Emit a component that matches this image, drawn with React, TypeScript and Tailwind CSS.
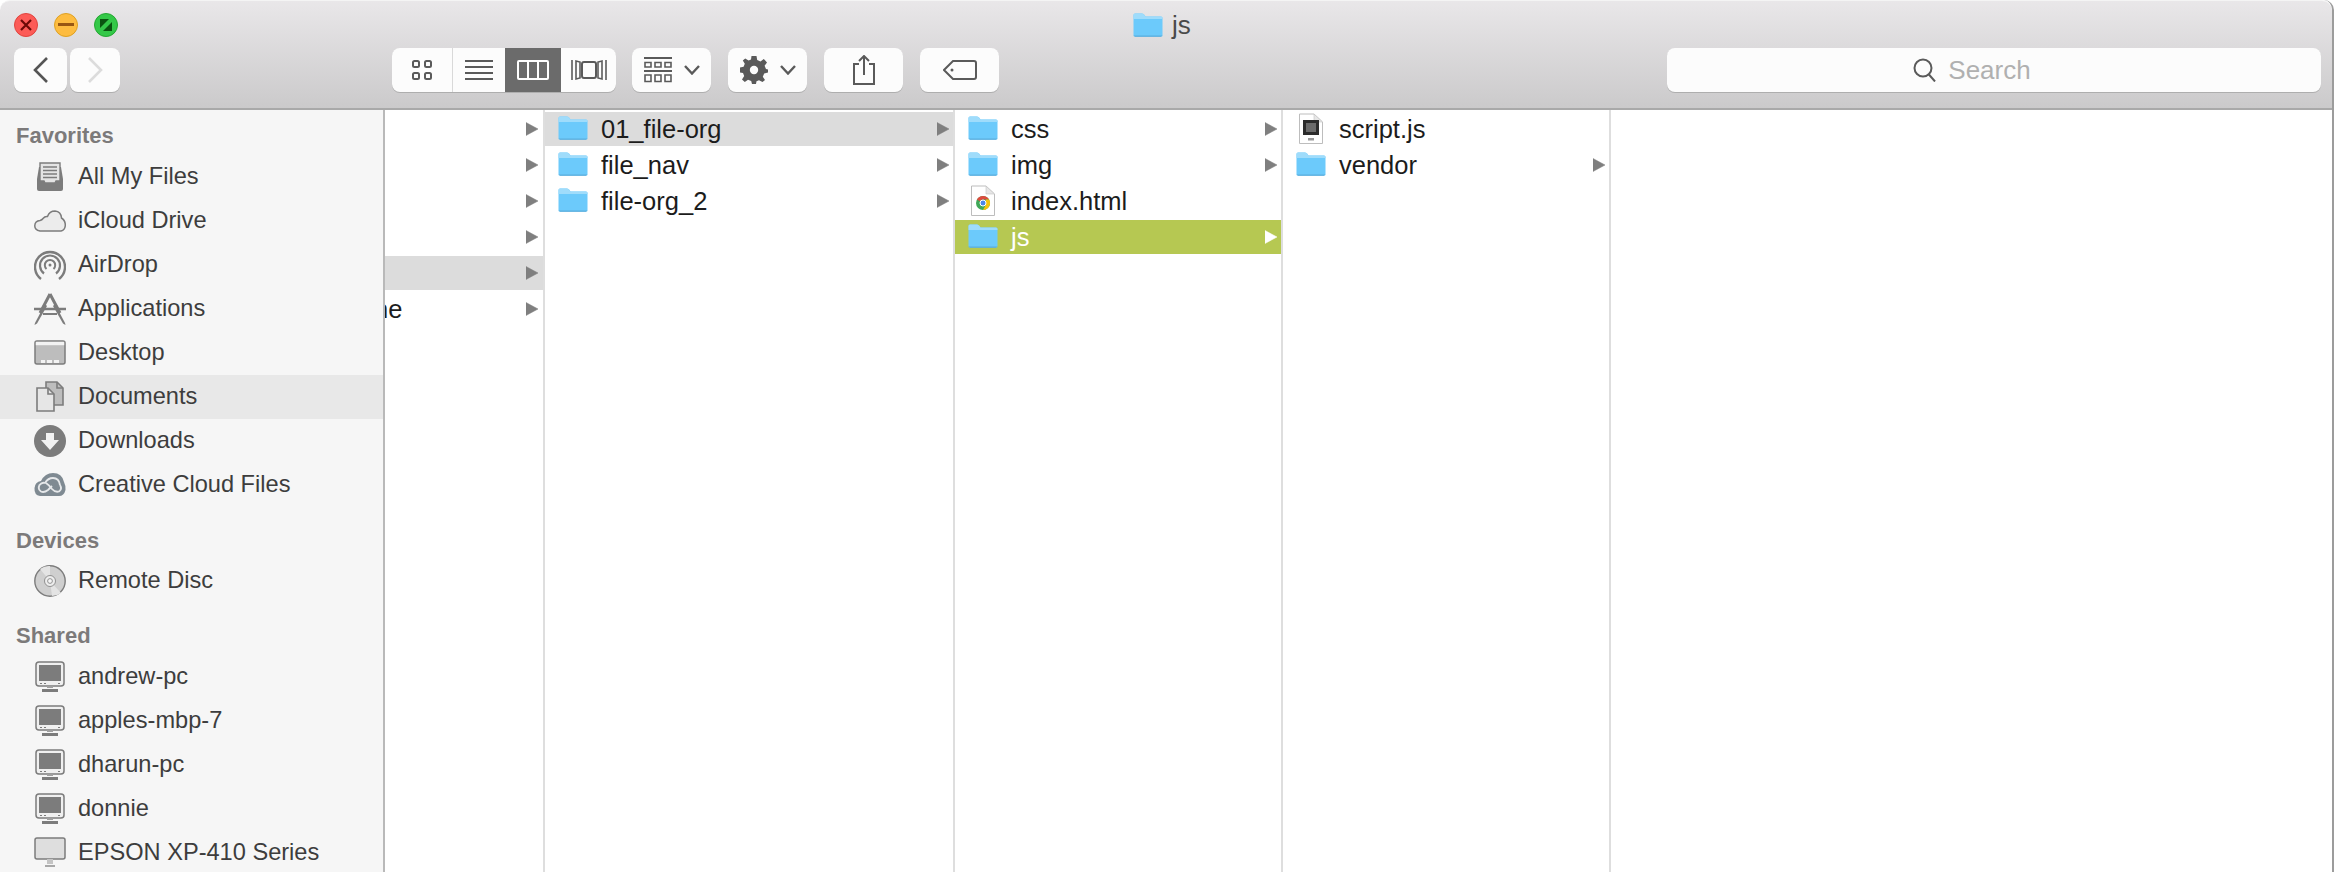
import type { ReactNode } from "react";

// Finder window, column view

function Folder({ className = "" }: { className?: string }) {
  return (
    <svg width="30" height="24" viewBox="0 0 30 24" className={`shrink-0 ${className}`}>
      <path d="M0.5 2 Q0.5 0.5 2 0.5 H9 Q10.5 0.5 11.5 2 L12.5 3.5 H28 Q29.5 3.5 29.5 5 V22 Q29.5 23.5 28 23.5 H2 Q0.5 23.5 0.5 22 Z" fill="#6ccafb" />
      <path d="M0.5 2 Q0.5 0.5 2 0.5 H9 Q10.5 0.5 11.5 2 L12.5 3.5 H28 Q29.5 3.5 29.5 5 V6 H0.5 Z" fill="#9fdcfb" />
      <path d="M0.5 22 Q0.5 23.5 2 23.5 H28 Q29.5 23.5 29.5 22 V22.4 H0.5 Z" fill="#5aaedd" />
      <path d="M2 23 H28 V23.6 H2 Z" fill="#5aaedd" />
    </svg>
  );
}

function ChromeFile() {
  return (
    <svg width="30" height="32" viewBox="0 0 30 32" className="shrink-0">
      <path d="M3.5 1 H18 L26.5 9 V30.5 H3.5 Z" fill="#fff" stroke="#bdbdbd" />
      <path d="M18 1 L26.5 9 H18 Z" fill="#e6e6e6" stroke="#c4c4c4" strokeWidth="0.6" />
      <circle cx="15" cy="18" r="7" fill="#3fa757" />
      <path d="M15 11 A7 7 0 0 1 21.1 14.5 L15 14.5 A3.5 3.5 0 0 0 11.9 16.3 L8.9 14.5 A7 7 0 0 1 15 11 Z" fill="#dd4b3e" />
      <path d="M21.1 14.5 A7 7 0 0 1 15 25 L18 19.5 L18 14.5 Z" fill="#f4c20d" />
      <circle cx="15" cy="18" r="3" fill="#4a86e8" stroke="#fff" />
    </svg>
  );
}

function ScriptFile() {
  return (
    <svg width="30" height="32" viewBox="0 0 30 32" className="shrink-0">
      <path d="M3.5 1 H18 L26.5 9 V30.5 H3.5 Z" fill="#fff" stroke="#bdbdbd" />
      <path d="M18 1 L26.5 9 H18 Z" fill="#e6e6e6" stroke="#c4c4c4" strokeWidth="0.6" />
      <rect x="7" y="7" width="16" height="15" fill="#2c2c2c" />
      <rect x="10" y="10" width="10" height="9" fill="#6b6b6b" />
      <rect x="12" y="25" width="6" height="2.5" fill="#9a9a9a" />
    </svg>
  );
}

function Arrow({ color = "#7f7f7f" }: { color?: string }) {
  return (
    <svg width="12" height="14" viewBox="0 0 12 14" className="shrink-0">
      <path d="M0 0.5 L12 7 L0 13.5 Z" fill={color} stroke={color} strokeWidth="0.5" strokeLinejoin="round" />
    </svg>
  );
}

type Entry = { name: string; icon?: "folder" | "chrome" | "script"; arrow?: boolean; state?: "gray" | "green" };

function Row({ entry }: { entry: Entry }) {
  const bg = entry.state === "green" ? "bg-[#b6c852]" : entry.state === "gray" ? "bg-[#dcdcdc]" : "";
  const text = entry.state === "green" ? "text-white" : "text-[#1c1c1c]";
  return (
    <div className={`flex items-center h-[34px] pl-[13px] pr-[4px] ${bg}`}>
      {entry.icon === "folder" && <Folder className="mb-[2px]" />}
      {entry.icon === "chrome" && <ChromeFile />}
      {entry.icon === "script" && <ScriptFile />}
      <span className={`ml-[13px] pt-[2px] text-[25.5px] leading-none ${text}`}>{entry.name}</span>
      {entry.arrow && (
        <span className="ml-auto">
          <Arrow color={entry.state === "green" ? "#ffffff" : "#7f7f7f"} />
        </span>
      )}
    </div>
  );
}

function Column({ width, entries }: { width: string; entries: Entry[] }) {
  return (
    <div className={`${width} shrink-0 h-full border-r-2 border-[#dedede] pt-[2px] flex flex-col gap-[2px]`}>
      {entries.map((e) => (
        <Row key={e.name} entry={e} />
      ))}
    </div>
  );
}

function FirstColumn() {
  const rows = [false, false, false, false, true, false];
  return (
    <div className="w-[160px] shrink-0 h-full border-r-2 border-[#dedede] pt-[2px] flex flex-col gap-[2px]">
      {rows.map((sel, i) => (
        <div key={i} className={`flex items-center h-[34px] pr-[5px] overflow-hidden ${sel ? "bg-[#dcdcdc]" : ""}`}>
          {i === 5 && <span className="-ml-[11px] pt-[2px] text-[25.5px] leading-none text-[#1c1c1c]">ne</span>}
          <span className="ml-auto">
            <Arrow />
          </span>
        </div>
      ))}
    </div>
  );
}

/* sidebar glyphs, all 32x32 and centred on the row */
const G = "#7c7c7c";

function AllFilesIcon() {
  return (
    <svg width="32" height="32" viewBox="0 0 32 32">
      <path d="M3 18 L5 6 H27 L29 18 V28 Q29 30 27 30 H5 Q3 30 3 28 Z" fill={G} />
      <path d="M6 2 H26 V20 H22 L21 22 H11 L10 20 H6 Z" fill="#e4e4e4" stroke={G} strokeWidth="1.4" />
      <path d="M9 6 H23 M9 9.5 H23 M9 13 H23 M9 16.5 H23" stroke={G} strokeWidth="1.4" />
    </svg>
  );
}

function CloudIcon() {
  return (
    <svg width="32" height="32" viewBox="0 0 32 32">
      <path d="M6 26 Q0.5 25 0.8 20.5 Q1 16 6 15.5 Q8 15 9 13.5 Q11 11 13.5 11.5 Q15.5 6 21 6 Q27 6.5 27.5 13 Q31.5 15.5 31.3 20.5 Q31 25 27 26 Z" fill="#ececec" stroke={G} strokeWidth="1.5" />
    </svg>
  );
}

function AirDropIcon() {
  return (
    <svg width="32" height="32" viewBox="0 0 32 32" fill="none" stroke={G}>
      <path d="M7 30 A15 15 0 1 1 25 30" strokeWidth="2.4" />
      <path d="M10 24.5 A10 10 0 1 1 22 24.5" strokeWidth="2.2" />
      <path d="M12.5 20 A5.2 5.2 0 1 1 19.5 20" strokeWidth="2" />
      <circle cx="16" cy="16" r="1.5" fill={G} stroke="none" />
    </svg>
  );
}

function AppsIcon() {
  return (
    <svg width="32" height="32" viewBox="0 0 32 32" fill="none">
      <path d="M16 1 L6 20 M16 1 L26 20" stroke={G} strokeWidth="3" />
      <path d="M0 16 H6 M26 16 H32 M6 16 H26" stroke={G} strokeWidth="2.4" />
      <path d="M11 11 L1 30 L0.5 32 L3 30.5 L13 13 Z" fill={G} />
      <path d="M21 11 L31 30 L31.5 32 L29 30.5 L19 13 Z" fill={G} />
      <path d="M9 21 H23" stroke={G} strokeWidth="2" />
    </svg>
  );
}

function DesktopIcon() {
  return (
    <svg width="32" height="32" viewBox="0 0 32 32">
      <rect x="1" y="4" width="30" height="23" rx="2" fill="#bdbdbd" stroke={G} strokeWidth="1.5" />
      <rect x="1.8" y="4.8" width="28.4" height="3.4" fill="#f3f3f3" />
      <path d="M7 23 H11 V26 H7 Z M13 23 H18 V26 H13 Z M20 23 H25 V26 H20 Z" fill="#f3f3f3" />
    </svg>
  );
}

function DocumentsIcon() {
  return (
    <svg width="32" height="32" viewBox="0 0 32 32">
      <path d="M12 1 H23 L29 7 V24 H12 Z" fill="#bdbdbd" stroke={G} strokeWidth="1.6" />
      <path d="M3 7 H14 L20 13 V30 H3 Z" fill="#e6e6e6" stroke={G} strokeWidth="1.6" />
      <path d="M14 7 V13 H20" fill="none" stroke={G} strokeWidth="1.6" />
      <path d="M23 1 V7 H29" fill="none" stroke={G} strokeWidth="1.6" />
    </svg>
  );
}

function DownloadsIcon() {
  return (
    <svg width="32" height="32" viewBox="0 0 32 32">
      <circle cx="16" cy="16" r="16" fill={G} />
      <path d="M12 8 H20 V15 H25 L16 25 L7 15 H12 Z" fill="#f2f2f2" />
    </svg>
  );
}

function CreativeCloudIcon() {
  return (
    <svg width="32" height="32" viewBox="0 0 32 32" fill="none">
      <path d="M6 27 Q0 26 0.5 19 Q1 13 7 12 Q11 4 19 4 Q28 4 30 13 Q32 17 31.5 21 Q30 27 25 27 Z" fill="#7f8a92" />
      <path d="M26 16 Q25 9 19 9 Q14 9 11 14 Q8 13 5.5 16 Q3.5 20 7 22.5 Q10 24 14 21 L18 17" stroke="#e6e8ea" strokeWidth="1.8" />
      <path d="M12 14 Q15 16 18 20 Q21 23.5 25 22.5 Q28.5 20 26 16" stroke="#e6e8ea" strokeWidth="1.8" />
    </svg>
  );
}

function DiscIcon() {
  return (
    <svg width="32" height="32" viewBox="0 0 32 32">
      <circle cx="16" cy="16" r="15.2" fill="#cfcfcf" stroke={G} strokeWidth="1.4" />
      <path d="M16 16 L6 4 A15 15 0 0 1 16 1 Z M16 16 L27 28 A15 15 0 0 1 18 31 Z" fill="#e4e4e4" />
      <circle cx="16" cy="16" r="5.5" fill="#ededed" stroke={G} strokeWidth="0.8" />
      <circle cx="16" cy="16" r="2.4" fill="#f6f6f6" stroke={G} strokeWidth="0.8" />
    </svg>
  );
}

function PcIcon() {
  return (
    <svg width="32" height="32" viewBox="0 0 32 32">
      <rect x="2" y="1" width="28" height="24" rx="3" fill="#f0f0f0" stroke={G} strokeWidth="1.5" />
      <rect x="5" y="4" width="22" height="16" fill="#7c7c7c" />
      <path d="M6 22 H8 V23 H6 Z M24 22 H26 V23 H24 Z M10 22 H12 V23 H10 Z" fill={G} />
      <path d="M13 25 H19 V27 H13 Z" fill="#a0a0a0" />
      <path d="M8 28 H24 V31 H8 Z" fill={G} />
    </svg>
  );
}

function PrinterIcon() {
  return (
    <svg width="32" height="32" viewBox="0 0 32 32">
      <rect x="1" y="1" width="30" height="21" rx="2" fill="#dedede" stroke={G} strokeWidth="1.5" />
      <path d="M13 22 H19 V27 H13 Z" fill="#c4c4c4" />
      <path d="M11 28 H21 V30 H11 Z" fill="#a8a8a8" />
    </svg>
  );
}

function SideItem({ icon, label, active }: { icon: ReactNode; label: string; active?: boolean }) {
  return (
    <div className={`flex items-center h-[44px] pl-[34px] shrink-0 ${active ? "bg-[#e8e8e8]" : ""}`}>
      {icon}
      <span className="ml-[12px] text-[23.6px] leading-none text-[#3d3d3d] whitespace-nowrap">{label}</span>
    </div>
  );
}

function SideHeading({ label, className = "" }: { label: string; className?: string }) {
  return (
    <div className={`pl-[16px] text-[22px] leading-[26px] font-bold text-[#7c7a7a] shrink-0 ${className}`}>{label}</div>
  );
}

function Sidebar() {
  return (
    <div className="w-[385px] shrink-0 h-full bg-[#f6f6f6] border-r-2 border-[#b9b9b9] flex flex-col pt-[13px] overflow-hidden">
      <SideHeading label="Favorites" className="mb-[6px]" />
      <SideItem icon={<AllFilesIcon />} label="All My Files" />
      <SideItem icon={<CloudIcon />} label="iCloud Drive" />
      <SideItem icon={<AirDropIcon />} label="AirDrop" />
      <SideItem icon={<AppsIcon />} label="Applications" />
      <SideItem icon={<DesktopIcon />} label="Desktop" />
      <SideItem icon={<DocumentsIcon />} label="Documents" active />
      <SideItem icon={<DownloadsIcon />} label="Downloads" />
      <SideItem icon={<CreativeCloudIcon />} label="Creative Cloud Files" />
      <SideHeading label="Devices" className="mt-[21px] mb-[5px]" />
      <SideItem icon={<DiscIcon />} label="Remote Disc" />
      <SideHeading label="Shared" className="mt-[20px] mb-[6px]" />
      <SideItem icon={<PcIcon />} label="andrew-pc" />
      <SideItem icon={<PcIcon />} label="apples-mbp-7" />
      <SideItem icon={<PcIcon />} label="dharun-pc" />
      <SideItem icon={<PcIcon />} label="donnie" />
      <SideItem icon={<PrinterIcon />} label="EPSON XP-410 Series" />
    </div>
  );
}

function ToolButton({ width, children }: { width: string; children: ReactNode }) {
  return (
    <div className={`${width} h-[44px] shrink-0 bg-[#fcfcfc] rounded-[8px] shadow-[0_1px_0_#aeaeae] flex items-center justify-center`}>
      {children}
    </div>
  );
}

function SmallChevron() {
  return (
    <svg width="16" height="10" viewBox="0 0 16 10" fill="none" stroke="#5a5a5a" strokeWidth="2.4">
      <path d="M1 1 L8 8.5 L15 1" />
    </svg>
  );
}

function Toolbar() {
  return (
    <div className="h-[110px] shrink-0 border-b-2 border-[#a9a9a9] rounded-t-[10px] bg-gradient-to-b from-[#e9e7e9] to-[#cbcacb] border-t border-t-[#f4f4f4] flex flex-col">
      <div className="h-[47px] shrink-0 flex items-center pl-[14px]">
        <span className="w-[24px] h-[24px] rounded-full bg-[#fc5b57] border border-[#e0443e] flex items-center justify-center">
          <svg width="14" height="14" viewBox="0 0 14 14" stroke="#6d0a06" strokeWidth="2.2">
            <path d="M2 2 L12 12 M12 2 L2 12" />
          </svg>
        </span>
        <span className="ml-[16px] w-[24px] h-[24px] rounded-full bg-[#fdbc40] border border-[#dea123] flex items-center justify-center">
          <span className="w-[16px] h-[3px] bg-[#985712]" />
        </span>
        <span className="ml-[16px] w-[24px] h-[24px] rounded-full bg-[#34c848] border border-[#24a732] flex items-center justify-center">
          <svg width="14" height="14" viewBox="0 0 14 14" fill="#0a5410">
            <path d="M1 1 H10 L1 10 Z" />
            <path d="M13 13 H4 L13 4 Z" />
          </svg>
        </span>
        <div className="ml-[1015px] flex items-center">
          <Folder />
          <span className="ml-[9px] text-[26px] leading-none text-[#4a4a4a]">js</span>
        </div>
      </div>
      <div className="flex items-center pl-[14px] pr-[11px]">
        <ToolButton width="w-[53px]">
          <svg width="16" height="26" viewBox="0 0 16 26" fill="none" stroke="#555" strokeWidth="2.6">
            <path d="M14 1 L2 13 L14 25" />
          </svg>
        </ToolButton>
        <div className="ml-[3px]">
          <ToolButton width="w-[50px]">
            <svg width="16" height="26" viewBox="0 0 16 26" fill="none" stroke="#dcdcdc" strokeWidth="2.6">
              <path d="M2 1 L14 13 L2 25" />
            </svg>
          </ToolButton>
        </div>
        <div className="ml-[272px] w-[224px] h-[44px] shrink-0 flex bg-[#fcfcfc] rounded-[8px] shadow-[0_1px_0_#aeaeae] overflow-hidden">
          <div className="w-[60px] flex items-center justify-center border-r border-[#d9d9d9] box-content">
            <svg width="20" height="20" viewBox="0 0 20 20" fill="none" stroke="#5a5a5a" strokeWidth="2">
              <rect x="1" y="1" width="6" height="6" rx="1.5" />
              <rect x="13" y="1" width="6" height="6" rx="1.5" />
              <rect x="1" y="13" width="6" height="6" rx="1.5" />
              <rect x="13" y="13" width="6" height="6" rx="1.5" />
            </svg>
          </div>
          <div className="w-[52px] flex items-center justify-center">
            <svg width="28" height="20" viewBox="0 0 28 20" stroke="#5a5a5a" strokeWidth="2">
              <path d="M0 1 H28 M0 7 H28 M0 13 H28 M0 19 H28" />
            </svg>
          </div>
          <div className="w-[56px] bg-[#6b6b6b] flex items-center justify-center">
            <svg width="32" height="20" viewBox="0 0 32 20">
              <rect x="0" y="0" width="32" height="20" rx="2" fill="#fff" />
              <path d="M2 2 H10 V18 H2 Z M12 2 H20 V18 H12 Z M22 2 H30 V18 H22 Z" fill="#6b6b6b" />
            </svg>
          </div>
          <div className="flex-1 flex items-center justify-center">
            <svg width="36" height="22" viewBox="0 0 36 22" fill="none" stroke="#5a5a5a" strokeWidth="1.6">
              <rect x="11" y="3" width="14" height="16" rx="2" strokeWidth="2" />
              <path d="M1 1 V21 M5 2 V20 L9 19 V3 Z M35 1 V21 M31 2 V20 L27 19 V3 Z" />
            </svg>
          </div>
        </div>
        <div className="ml-[16px]">
          <ToolButton width="w-[79px]">
            <svg width="28" height="26" viewBox="0 0 28 26" stroke="#5a5a5a" fill="none">
              <path d="M0 1 H28 M0 14 H28" strokeWidth="2" />
              <path d="M1 5.5 H7 V10 H1 Z M11 5.5 H17 V10 H11 Z M21 5.5 H27 V10 H21 Z M1 18 H7 V24.5 H1 Z M11 18 H17 V24.5 H11 Z M21 18 H27 V24.5 H21 Z" strokeWidth="1.6" />
            </svg>
            <span className="ml-[12px]">
              <SmallChevron />
            </span>
          </ToolButton>
        </div>
        <div className="ml-[17px]">
          <ToolButton width="w-[79px]">
            <svg width="28" height="28" viewBox="0 0 28 28">
              <path d="M11.5 0 H16.5 L17.2 4 L20.5 5.4 L23.8 3 L25 4.2 L27 6.5 L24.6 9.8 L26 13 L28 13.5 V16.5 L24.2 17.5 L22.8 20.8 L25 24 L22.5 26 L19 24.2 L16.5 25.2 L16 28 H12 L11.2 25 L8 23.8 L4.8 26 L2 23.5 L4.2 20 L3 17 L0 16.5 V11.5 L3.6 10.8 L4.8 7.8 L2.8 4.6 L5.2 2.4 L8.6 4.4 L11 3.4 Z" fill="#5a5a5a" />
              <circle cx="14" cy="14" r="4.2" fill="#fcfcfc" />
            </svg>
            <span className="ml-[12px]">
              <SmallChevron />
            </span>
          </ToolButton>
        </div>
        <div className="ml-[17px]">
          <ToolButton width="w-[79px]">
            <svg width="22" height="30" viewBox="0 0 22 30" fill="none" stroke="#5a5a5a" strokeWidth="2">
              <path d="M6 9 H1 V29 H21 V9 H16" />
              <path d="M11 20 V1 M6 6 L11 1 L16 6" />
            </svg>
          </ToolButton>
        </div>
        <div className="ml-[17px]">
          <ToolButton width="w-[79px]">
            <svg width="34" height="20" viewBox="0 0 34 20" fill="none" stroke="#5a5a5a" strokeWidth="2">
              <path d="M10 1 H31 Q33 1 33 3 V17 Q33 19 31 19 H10 L1 10 Z" />
              <circle cx="9" cy="10" r="1.5" fill="#5a5a5a" stroke="none" />
            </svg>
          </ToolButton>
        </div>
        <div className="ml-auto w-[654px] h-[44px] shrink-0 bg-[#fcfcfc] rounded-[8px] shadow-[0_1px_0_#aeaeae] flex items-center justify-center pr-[44px]">
          <svg width="24" height="24" viewBox="0 0 24 24" fill="none" stroke="#5a5a5a" strokeWidth="2">
            <circle cx="10" cy="10" r="8.5" />
            <path d="M15.5 16 L22 23.5" />
          </svg>
          <span className="ml-[11px] text-[26px] leading-none text-[#b0b0b0]">Search</span>
        </div>
      </div>
    </div>
  );
}

const col1: Entry[] = [
  { name: "01_file-org", icon: "folder", arrow: true, state: "gray" },
  { name: "file_nav", icon: "folder", arrow: true },
  { name: "file-org_2", icon: "folder", arrow: true },
];

const col2: Entry[] = [
  { name: "css", icon: "folder", arrow: true },
  { name: "img", icon: "folder", arrow: true },
  { name: "index.html", icon: "chrome" },
  { name: "js", icon: "folder", arrow: true, state: "green" },
];

const col3: Entry[] = [
  { name: "script.js", icon: "script" },
  { name: "vendor", icon: "folder", arrow: true },
];

export default function App() {
  return (
    <div className="w-[2334px] h-[872px] overflow-hidden bg-white border-r-2 border-[#9c9c9c] rounded-tr-[10px] flex flex-col font-['Liberation_Sans',Arial,sans-serif]">
      <Toolbar />
      <div className="flex-1 min-h-0 flex">
        <Sidebar />
        <FirstColumn />
        <Column width="w-[410px]" entries={col1} />
        <Column width="w-[328px]" entries={col2} />
        <Column width="w-[328px]" entries={col3} />
        <div className="flex-1" />
      </div>
    </div>
  );
}
